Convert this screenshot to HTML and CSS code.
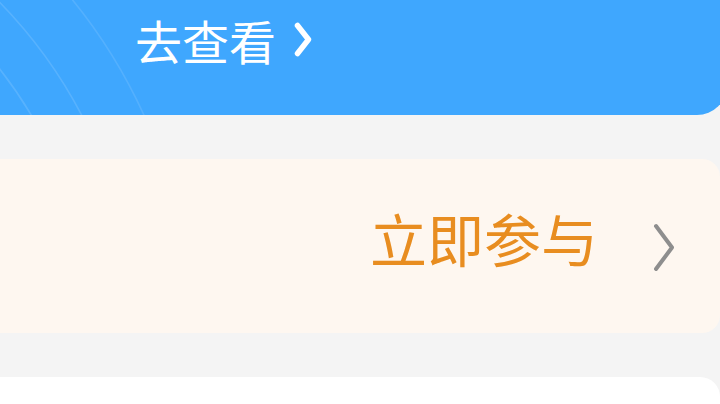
FILE: index.html
```html
<!DOCTYPE html>
<html lang="zh-CN">
<head>
<meta charset="utf-8">
<title>立即参与</title>
<link rel="stylesheet" href="styles.css">
</head>
<body>
<div class="page">
  <section class="banner">
    <svg class="banner-arcs" width="727" height="115" viewBox="0 0 727 115" aria-hidden="true">
      <circle cx="-347" cy="340" r="440" fill="none" stroke="#ffffff" stroke-opacity="0.13" stroke-width="1.6"/>
      <circle cx="-347" cy="340" r="484" fill="none" stroke="#ffffff" stroke-opacity="0.13" stroke-width="1.6"/>
      <circle cx="-347" cy="340" r="540" fill="none" stroke="#ffffff" stroke-opacity="0.11" stroke-width="1.6"/>
    </svg>
    <a class="banner-link">
      <span class="banner-text">去查看</span>
      <svg class="banner-chev" width="18" height="35" viewBox="0 0 18 35" aria-hidden="true">
        <path d="M3.5 3.5 L14.5 17.5 L3.5 31.5" fill="none" stroke="#ffffff" stroke-width="5.5" stroke-linecap="round" stroke-linejoin="round"/>
      </svg>
    </a>
  </section>

  <section class="join-card">
    <span class="join-text">立即参与</span>
    <svg class="join-chev" width="22" height="49" viewBox="0 0 22 49" aria-hidden="true">
      <path d="M3 3 L19 24.5 L3 46" fill="none" stroke="#8e8e8e" stroke-width="4" stroke-linecap="round" stroke-linejoin="round"/>
    </svg>
  </section>

  <section class="next-card"></section>
</div>
</body>
</html>
```

FILE: styles.css
```css
html, body {
  margin: 0;
  padding: 0;
}
body {
  width: 720px;
  height: 404px;
  overflow: hidden;
  background: #f4f4f4;
  font-family: "Noto Sans CJK SC", "Noto Sans", sans-serif;
}
.page {
  display: flex;
  flex-direction: column;
  width: 720px;
}
.banner {
  position: relative;
  height: 115px;
  margin-right: -7px;
  background: #3fa7fe;
  border-bottom-right-radius: 30px;
  overflow: hidden;
  display: flex;
  align-items: flex-start;
  padding: 16px 0 0 135px;
  box-sizing: border-box;
}
.banner-arcs {
  position: absolute;
  left: 0;
  top: 0;
}
.banner-link {
  position: relative;
  display: flex;
  align-items: center;
  color: #ffffff;
}
.banner-text {
  font-size: 47px;
  line-height: 1;
  font-weight: 400;
}
.banner-chev {
  margin-left: 18px;
  margin-top: 0;
}
.join-card {
  margin-top: 44px;
  height: 174px;
  background: #fef7f0;
  border-top-right-radius: 18px;
  border-bottom-right-radius: 18px;
  display: flex;
  align-items: center;
  justify-content: flex-end;
  padding-right: 45px;
}
.join-text {
  font-size: 57px;
  line-height: 1;
  color: #e88d20;
  margin-bottom: 17px;
}
.join-chev {
  margin-left: 55px;
  margin-top: 2px;
}
.next-card {
  margin-top: 44px;
  height: 40px;
  background: #ffffff;
  border-top-right-radius: 20px;
}
```
